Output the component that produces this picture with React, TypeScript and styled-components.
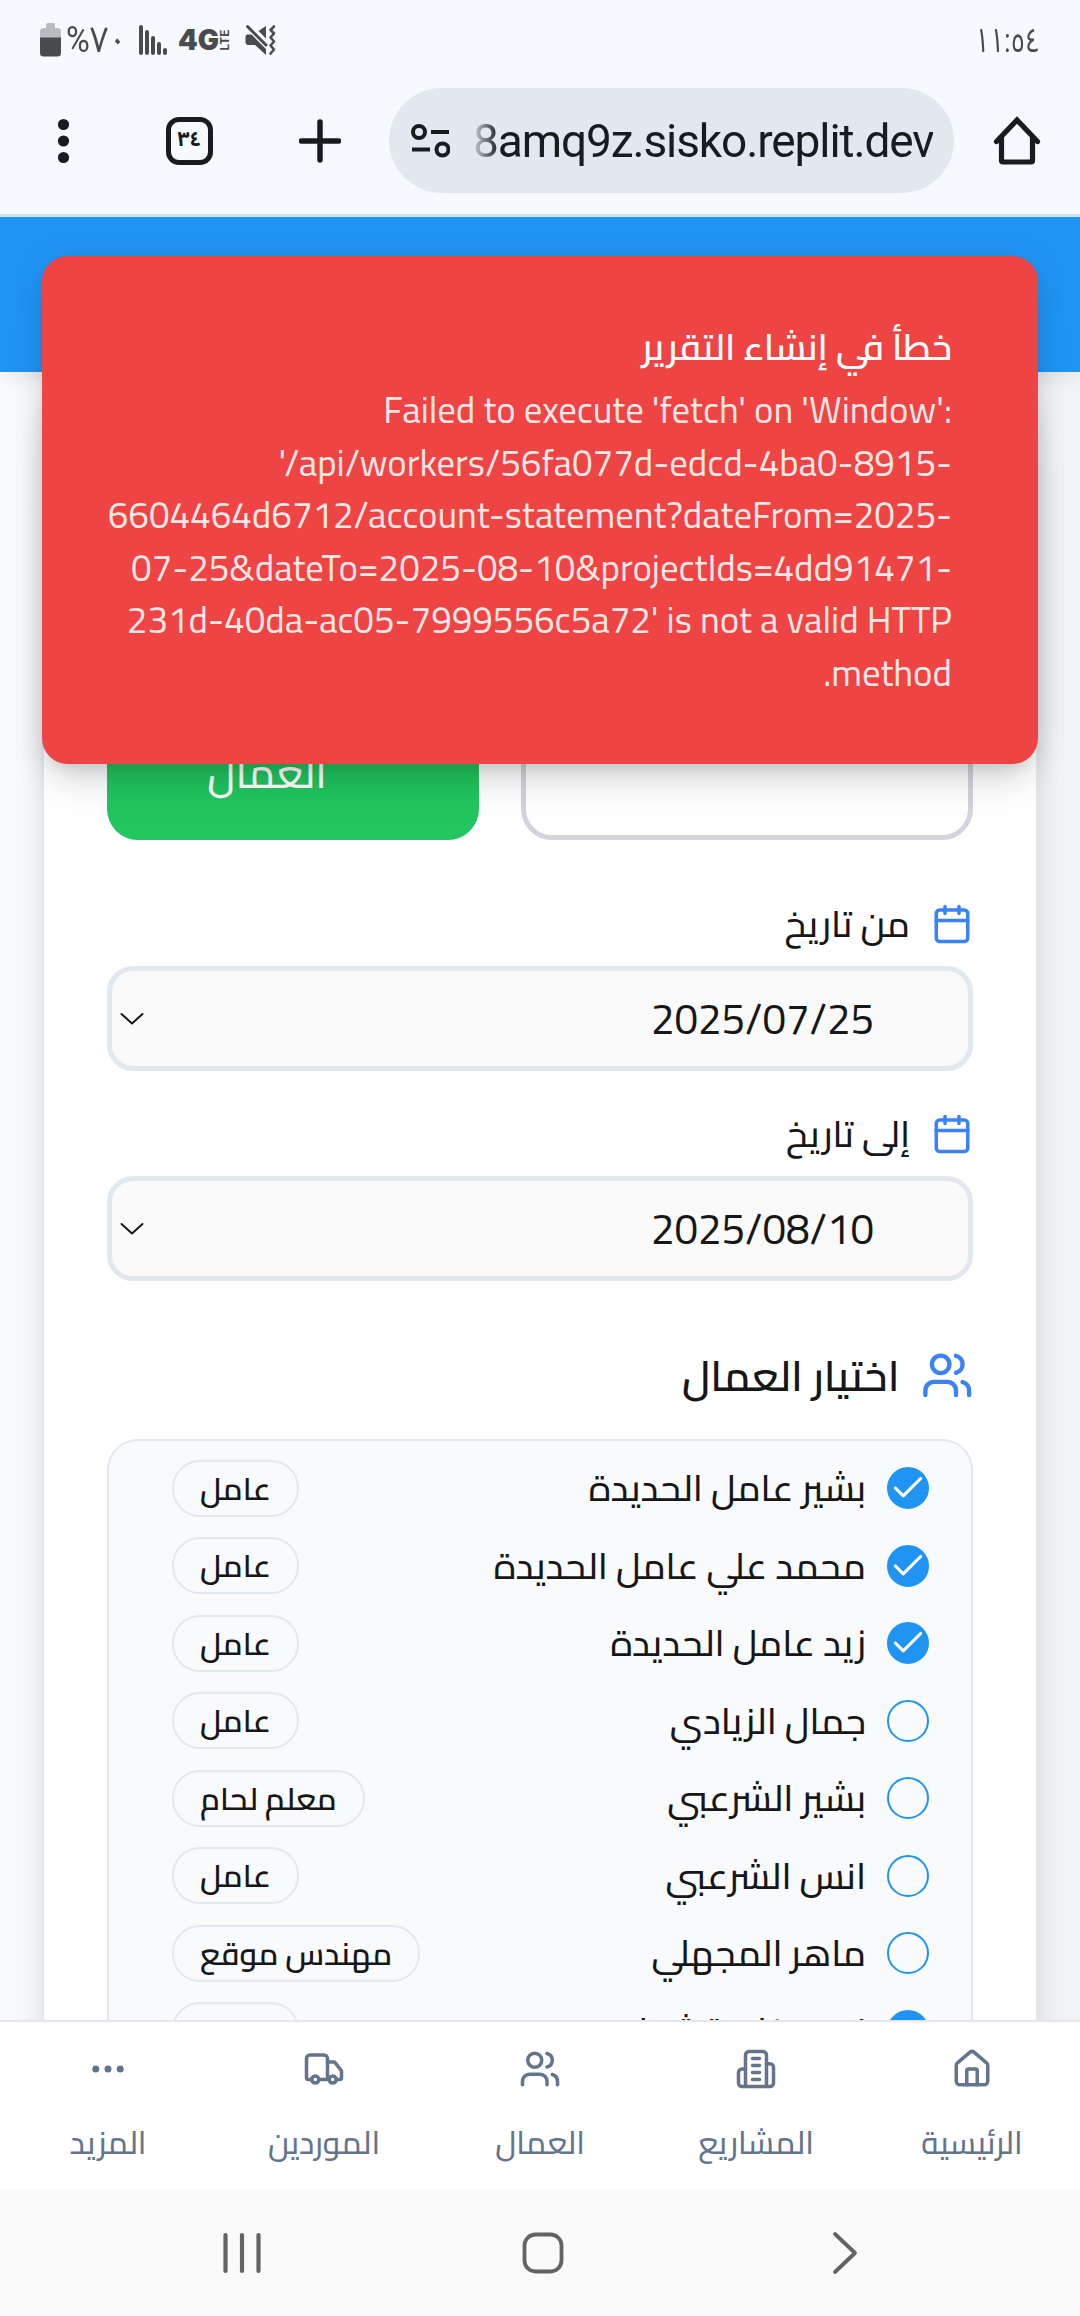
import React from "react";
import styled, { createGlobalStyle, css } from "styled-components";

const arabic = `Cairo, "Noto Sans Arabic", "Open Sans", "DejaVu Sans", sans-serif`;
const system = `Roboto, "Noto Sans Arabic", "DejaVu Sans", sans-serif`;

const Global = createGlobalStyle`
  *, *::before, *::after { box-sizing: border-box; }
  body { margin: 0; background: #fff; font-family: ${arabic}; color: #171717; }
`;

const Screen = styled.div`
  width: 1080px;
  height: 2316px;
  display: flex;
  flex-direction: column;
  overflow: hidden;
`;

/* ---------- system status bar and browser toolbar ---------- */

const StatusBar = styled.div`
  height: 82px;
  flex: none;
  display: flex;
  align-items: center;
  justify-content: space-between;
  padding: 0 40px 2px 40px;
  background: #f6f9fe;
  color: #4a4b4c;
`;

const StatusGroup = styled.div`
  display: flex;
  align-items: center;
`;

const StatusText = styled.span`
  font-family: ${system};
  line-height: 40px;
  white-space: nowrap;
`;

const BatteryLevel = styled(StatusText)`
  width: 60px;
  font-size: 36px;
  transform: scaleX(0.9);
  transform-origin: left center;
`;

const Clock = styled(StatusText)`
  font-size: 34px;
  transform: scaleX(0.76);
  transform-origin: right center;
`;

const Battery = styled.span`
  display: flex;
  width: 21px;
  margin-right: 5px;
`;

const SignalIcons = styled.svg`
  margin-left: 13px;
`;

const Toolbar = styled.div`
  height: 135px;
  flex: none;
  display: flex;
  align-items: center;
  padding: 0 39px 15px 55px;
  background: #f6f9fe;
  border-bottom: 3px solid #d2e1ec;
`;

const ToolIcon = styled.svg<{ $gap: number }>`
  flex: none;
  display: block;
  margin-right: ${(p) => p.$gap}px;
`;

const TabCount = styled.div`
  width: 47px;
  height: 48px;
  margin-right: 86px;
  border: 5px solid #191c1f;
  border-radius: 13px;
  display: flex;
  align-items: center;
  justify-content: center;
  font-family: ${system};
  font-size: 21px;
  font-weight: 700;
  line-height: 30px;
  color: #191c1f;
  padding-bottom: 3px;
  flex: none;
`;

const AddressBar = styled.div`
  width: 565px;
  height: 105px;
  margin-right: 39px;
  flex: none;
  border-radius: 53px;
  background: #e1e8f0;
  display: flex;
  align-items: center;
  padding-left: 22px;
`;

const Url = styled.span`
  font-family: Roboto, "Open Sans", sans-serif;
  font-size: 46px;
  line-height: 60px;
  letter-spacing: -1.1px;
  color: #191c1f;
  white-space: nowrap;
  mask-image: linear-gradient(to right, rgba(0, 0, 0, 0.1), #000 26px);
`;

/* ---------- page ---------- */

const Page = styled.main`
  position: relative;
  flex: 1;
  min-height: 0;
  overflow: hidden;
  direction: rtl;
  background: linear-gradient(to right, #f8fafc, #f2f3f5);
`;

const AppHeader = styled.div`
  position: relative;
  height: 155px;
  background: #2094f3;
  box-shadow: 0 10px 16px -4px rgba(0, 0, 0, 0.07);
`;

const Card = styled.section`
  margin: 20px 42px 0;
  height: 1728px;
  padding: 248px 63px 0;
  border: 2px solid #e2e8f0;
  border-radius: 31px;
  background: #fff;
  box-shadow: 0 26px 39px -8px rgba(0, 0, 0, 0.1), 0 0 26px rgba(0, 0, 0, 0.06);
`;

const ModeRow = styled.div`
  display: flex;
  gap: 42px;
  height: 198px;
  margin-bottom: 63px;
`;

const ModeButton = styled.button<{ $active?: boolean }>`
  font: 500 42px/63px ${arabic};
  border-radius: 31px;
  display: flex;
  align-items: flex-end;
  justify-content: center;
  ${(p) =>
    p.$active
      ? css`
          width: 372px;
          border: 0;
          background: #22c55e;
          color: #fff;
          padding: 0 52px 36px 0;
        `
      : css`
          width: 452px;
          border: 5px solid #d1d5db;
          background: #fff;
          color: #1f2937;
          padding: 0 46px 66px 0;
        `}
`;

const Field = styled.div`
  margin-bottom: 42px;
`;

const FieldLabel = styled.label`
  display: flex;
  align-items: center;
  gap: 21px;
  height: 42px;
  margin-bottom: 21px;
  font-size: 36.75px;
  font-weight: 500;
  line-height: 42px;
`;

const DateBox = styled.div`
  height: 105px;
  border: 5px solid #e2e8f0;
  border-radius: 26px;
  background: #fafafa;
  display: flex;
  align-items: center;
  justify-content: space-between;
  padding: 0 94px 0 8px;
  font-size: 42px;
  line-height: 1;
`;

const SectionTitle = styled.h3`
  display: flex;
  align-items: center;
  gap: 21px;
  height: 53px;
  margin: 68px 0 37px;
  font-size: 42px;
  font-weight: 600;
  line-height: 53px;
`;

const WorkerList = styled.div`
  display: flex;
  flex-direction: column;
  gap: 21px;
  height: 800px;
  padding: 19px 42px 0 63px;
  border: 2px solid #e2e8f0;
  border-radius: 31px;
  background: #f8fafc;
`;

const WorkerRow = styled.div`
  height: 56.5px;
  flex: none;
  display: flex;
  align-items: center;
  gap: 21px;
  font-size: 36.75px;
  font-weight: 500;
  line-height: 52px;
  white-space: nowrap;
`;

const CheckCircle = styled.span<{ $on: boolean }>`
  width: 42px;
  height: 42px;
  flex: none;
  border-radius: 50%;
  border: 2px solid #2094f3;
  background: ${(p) => (p.$on ? "#2094f3" : "transparent")};
  display: flex;
  align-items: center;
  justify-content: center;
`;

const JobBadge = styled.span`
  margin-right: auto;
  height: 57px;
  padding: 0 26px;
  border: 2px solid #e2e8f0;
  border-radius: 28px;
  font-size: 31.5px;
  font-weight: 600;
  line-height: 53px;
`;

const Toast = styled.div`
  position: absolute;
  top: 39px;
  left: 42px;
  width: 996px;
  height: 508px;
  padding: 63px 84px 63px 63px;
  border: 2px solid #ef4444;
  border-radius: 26px;
  background: #ef4444;
  color: #fff;
  font-size: 36.75px;
  line-height: 52.5px;
  box-shadow: 0 26px 39px -8px rgba(0, 0, 0, 0.12), 0 10px 16px -10px rgba(0, 0, 0, 0.12), 0 4px 30px rgba(0, 0, 0, 0.1);
`;

const ToastTitle = styled.div`
  font-weight: 600;
  margin-bottom: 10.5px;
`;

const ToastText = styled.div`
  color: rgba(255, 255, 255, 0.88);
  overflow-wrap: break-word;
`;

const Unbroken = styled.span`
  white-space: nowrap;
`;

/* ---------- bottom bars ---------- */

const TabBar = styled.nav`
  height: 170px;
  flex: none;
  direction: rtl;
  display: grid;
  grid-template-columns: repeat(5, 1fr);
  border-top: 2px solid #e2e8f0;
  background: #fff;
  color: #64748b;
`;

const TabItem = styled.div`
  display: flex;
  flex-direction: column;
  align-items: center;
  padding-top: 26px;
  gap: 32px;
  font-size: 31.5px;
  font-weight: 500;
  line-height: 42px;
`;

const SystemNav = styled.div`
  height: 126px;
  flex: none;
  display: flex;
  justify-content: center;
  align-items: center;
  gap: 260px;
  padding-left: 5px;
  background: #fafafa;
`;

const Line = styled.svg<{ $size: number }>`
  width: ${(p) => p.$size}px;
  height: ${(p) => p.$size}px;
  flex: none;
  display: block;
  fill: none;
  stroke: currentColor;
  stroke-width: 2;
  stroke-linecap: round;
  stroke-linejoin: round;
`;

const CheckMark = styled(Line)`
  color: #fff;
`;

const BlueIcon = styled.span`
  color: #3b82f6;
  display: flex;
`;

const icons: Record<string, React.ReactNode> = {
  calendar: (
    <>
      <path d="M8 2v4M16 2v4" />
      <rect width="18" height="18" x="3" y="4" rx="2" />
      <path d="M3 10h18" />
    </>
  ),
  users: (
    <>
      <path d="M16 21v-2a4 4 0 0 0-4-4H6a4 4 0 0 0-4 4v2" />
      <circle cx="9" cy="7" r="4" />
      <path d="M22 21v-2a4 4 0 0 0-3-3.87M16 3.13a4 4 0 0 1 0 7.75" />
    </>
  ),
  home: (
    <>
      <path d="M15 21v-8a1 1 0 0 0-1-1h-4a1 1 0 0 0-1 1v8" />
      <path d="M3 10a2 2 0 0 1 .709-1.528l7-5.999a2 2 0 0 1 2.582 0l7 5.999A2 2 0 0 1 21 10v9a2 2 0 0 1-2 2H5a2 2 0 0 1-2-2z" />
    </>
  ),
  building: (
    <>
      <path d="M6 22V4a2 2 0 0 1 2-2h8a2 2 0 0 1 2 2v18Z" />
      <path d="M6 12H4a2 2 0 0 0-2 2v6a2 2 0 0 0 2 2h2M18 9h2a2 2 0 0 1 2 2v9a2 2 0 0 1-2 2h-2" />
      <path d="M10 6h4M10 10h4M10 14h4M10 18h4" />
    </>
  ),
  truck: (
    <>
      <path d="M14 18V6a2 2 0 0 0-2-2H4a2 2 0 0 0-2 2v11a1 1 0 0 0 1 1h2M15 18H9" />
      <path d="M19 18h2a1 1 0 0 0 1-1v-3.65a1 1 0 0 0-.22-.624l-3.48-4.35A1 1 0 0 0 17.52 8H14" />
      <circle cx="17" cy="18" r="2" />
      <circle cx="7" cy="18" r="2" />
    </>
  ),
  more: (
    <>
      <circle cx="12" cy="12" r="1" />
      <circle cx="19" cy="12" r="1" />
      <circle cx="5" cy="12" r="1" />
    </>
  ),
};

const Icon = ({ name, size }: { name: string; size: number }) => (
  <Line $size={size} viewBox="0 0 24 24">
    {icons[name]}
  </Line>
);

const workers = [
  { name: "بشير عامل الحديدة", job: "عامل", on: true },
  { name: "محمد علي عامل الحديدة", job: "عامل", on: true },
  { name: "زيد عامل الحديدة", job: "عامل", on: true },
  { name: "جمال الزيادي", job: "عامل", on: false },
  { name: "بشير الشرعبي", job: "معلم لحام", on: false },
  { name: "انس الشرعبي", job: "عامل", on: false },
  { name: "ماهر المجهلي", job: "مهندس موقع", on: false },
  { name: "نعيم خان قشوان", job: "عامل", on: true },
];

const tabs = [
  { icon: "home", label: "الرئيسية" },
  { icon: "building", label: "المشاريع" },
  { icon: "users", label: "العمال" },
  { icon: "truck", label: "الموردين" },
  { icon: "more", label: "المزيد" },
];

const DateField = ({ label, value }: { label: string; value: string }) => (
  <Field>
    <FieldLabel>
      <BlueIcon>
        <Icon name="calendar" size={42} />
      </BlueIcon>
      {label}
    </FieldLabel>
    <DateBox>
      <bdi>{value}</bdi>
      <svg width="24" height="14" viewBox="0 0 24 14" fill="none" stroke="#171717" strokeWidth="2" strokeLinejoin="round" strokeLinecap="round">
        <path d="M1.500 2l10.500 9.500L22.500 2" />
      </svg>
    </DateBox>
  </Field>
);

export default function App() {
  return (
    <Screen>
      <Global />
      <StatusBar>
        <StatusGroup>
          <Battery>
            <svg width="21" height="34" viewBox="0 0 21 34">
              <path d="M7.500 0h6a1.500 1.500 0 0 1 1.500 1.500V5h2.500A3.500 3.500 0 0 1 21 8.500V15H0V8.500A3.500 3.500 0 0 1 3.500 5H6V1.500A1.500 1.500 0 0 1 7.500 0z" fill="#b9bcc0" />
              <path d="M0 14.500h21V30a3.500 3.500 0 0 1-3.500 3.500h-14A3.500 3.500 0 0 1 0 30z" fill="#4a4b4c" />
            </svg>
          </Battery>
          <BatteryLevel>%٧٠</BatteryLevel>
          <SignalIcons width="106" height="32" viewBox="0 0 106 32" fill="#4a4b4c">
            <rect x="0" y="1" width="4" height="30" rx="2" />
            <rect x="6" y="6" width="4" height="25" rx="2" />
            <rect x="12" y="12" width="4" height="19" rx="2" />
            <rect x="18" y="18" width="4" height="13" rx="2" />
            <rect x="24" y="24" width="4" height="7" rx="2" />
            <text x="39" y="26" fontFamily="Inter, sans-serif" fontWeight="900" fontSize="28" textLength="41" lengthAdjust="spacingAndGlyphs">4G</text>
            <text transform="translate(90 26.500) rotate(-90)" fontFamily="Inter, sans-serif" fontWeight="700" fontSize="11.500" textLength="21" lengthAdjust="spacingAndGlyphs">LTE</text>
          </SignalIcons>
          <svg width="31" height="32" viewBox="0 0 31 32" fill="#4a4b4c">
            <path d="M21 2v12.500L13.500 7z" />
            <path d="M2 10.500h4.500L21 25v6L10 21H3.500A3 3 0 0 1 0.500 18v-5A2.500 2.500 0 0 1 2 10.500z" />
            <path d="M2.500 2.500L21 21" stroke="#4a4b4c" strokeWidth="3" strokeLinecap="round" />
            <path d="M29 2.500l-3.500 3.500 3.500 3.500-3.500 4 3.500 4-3.500 4 3.500 4-3.500 4" fill="none" stroke="#4a4b4c" strokeWidth="2.600" strokeLinejoin="round" strokeLinecap="round" />
          </svg>
        </StatusGroup>
        <Clock>١١:٥٤</Clock>
      </StatusBar>

      <Toolbar>
        <ToolIcon $gap={94} width="17" height="46" viewBox="0 0 17 46" fill="#191c1f">
          <circle cx="8.500" cy="6.500" r="5.600" />
          <circle cx="8.500" cy="23" r="5.600" />
          <circle cx="8.500" cy="39.500" r="5.600" />
        </ToolIcon>
        <TabCount>٣٤</TabCount>
        <ToolIcon $gap={48} width="42" height="44" viewBox="0 0 42 44" stroke="#191c1f" strokeWidth="5.500" strokeLinecap="round">
          <path d="M21 3v38M2.500 22h37" />
        </ToolIcon>
        <AddressBar>
          <ToolIcon $gap={23} width="39" height="34" viewBox="0 0 39 34" fill="none" stroke="#191c1f" strokeWidth="4">
            <circle cx="8" cy="8" r="6" />
            <path d="M20 8h18M1 25.500h18" />
            <circle cx="31.500" cy="25.500" r="6" />
          </ToolIcon>
          <Url>8amq9z.sisko.replit.dev</Url>
        </AddressBar>
        <ToolIcon $gap={0} width="48" height="50" viewBox="0 0 48 50" fill="none" stroke="#191c1f" strokeWidth="5.200" strokeLinejoin="round" strokeLinecap="round">
          <path d="M3.500 25.500L24 4l20.500 21.500" strokeLinejoin="miter" />
          <path d="M8.500 22v22.500a1.500 1.500 0 0 0 1.500 1.500h28a1.500 1.500 0 0 0 1.500-1.500V22" />
        </ToolIcon>
      </Toolbar>

      <Page>
        <AppHeader />
        <Card>
          <ModeRow>
            <ModeButton>عامل مفرد</ModeButton>
            <ModeButton $active>العمال</ModeButton>
          </ModeRow>
          <DateField label="من تاريخ" value="2025/07/25" />
          <DateField label="إلى تاريخ" value="2025/08/10" />
          <SectionTitle>
            <BlueIcon>
              <Icon name="users" size={52.5} />
            </BlueIcon>
            اختيار العمال
          </SectionTitle>
          <WorkerList>
            {workers.map((w) => (
              <WorkerRow key={w.name}>
                <CheckCircle $on={w.on}>
                  {w.on && (
                    <CheckMark $size={38} viewBox="0 0 24 24">
                      <path d="M20 6 9 17l-5-5" />
                    </CheckMark>
                  )}
                </CheckCircle>
                <span>{w.name}</span>
                <JobBadge>{w.job}</JobBadge>
              </WorkerRow>
            ))}
          </WorkerList>
        </Card>
        <Toast>
          <ToastTitle>خطأ في إنشاء التقرير</ToastTitle>
          <ToastText>
            Failed to execute 'fetch' on 'Window':
            '/api/workers/56fa077d-edcd-4ba0-8915-<Unbroken>6604464d6712/account-statement?dateFrom=2025-</Unbroken><wbr />
            <Unbroken>07-25&amp;dateTo=2025-08-10&amp;projectIds=4dd91471-</Unbroken><wbr />
            231d-40da-ac05-7999556c5a72' is not a valid HTTP method.
          </ToastText>
        </Toast>
      </Page>

      <TabBar>
        {tabs.map((t) => (
          <TabItem key={t.icon}>
            <Icon name={t.icon} size={42} />
            {t.label}
          </TabItem>
        ))}
      </TabBar>

      <SystemNav>
        <svg width="40" height="42" viewBox="0 0 40 42" stroke="#636363" strokeWidth="4.200" strokeLinecap="round">
          <path d="M3.500 3v36M20 3v36M36.500 3v36" />
        </svg>
        <svg width="42" height="42" viewBox="0 0 42 42" fill="none" stroke="#636363" strokeWidth="3.800">
          <rect x="2.500" y="2.500" width="37" height="37" rx="11" />
        </svg>
        <svg width="40" height="44" viewBox="0 0 40 44" fill="none" stroke="#636363" strokeWidth="3.800" strokeLinecap="round" strokeLinejoin="round">
          <path d="M11 3l20 19-20 19" />
        </svg>
      </SystemNav>
    </Screen>
  );
}
